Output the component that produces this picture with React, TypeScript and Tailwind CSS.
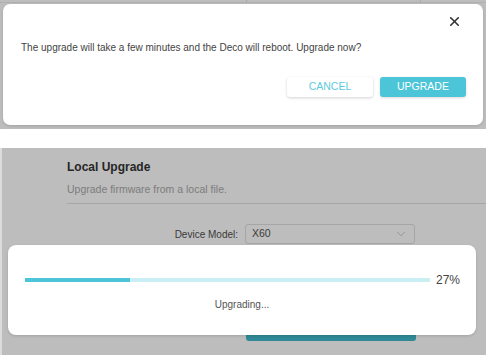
import { X, ChevronDown } from 'lucide-react';

export default function App() {
  return (
    <div className="w-[486px] h-[355px] bg-white overflow-hidden font-['Liberation_Sans',Arial,sans-serif]">
      {/* First shot: confirm dialog */}
      <div className="relative h-[129px] bg-[#bdbdbd] overflow-hidden">
        {/* page content peeking behind the overlay */}
        <div className="absolute left-0 right-0 top-[-9px] h-[12px] flex items-end border-b border-[#b0b0b0]">
          <div className="w-[246px] pr-[6px] text-right text-[10px] leading-[12px] text-[#555]">Device Model:</div>
          <div className="w-[175px] h-full border-l border-r border-[#a8a8a8] pl-[7px] text-[10px] leading-[12px] text-[#555]">X60</div>
        </div>
        <div className="relative mx-[3px] mt-[4px] h-[121px] bg-white rounded-[7px] shadow-[0_1px_3px_rgba(0,0,0,0.15)]">
          <button className="absolute right-[21px] top-[10px] text-[#333]">
            <X className="w-[15px] h-[15px]" strokeWidth={2.6} />
          </button>
          <div className="pt-[37px] pl-[18px] text-[10px] leading-[13px] text-[#444]">
            The upgrade will take a few minutes and the Deco will reboot. Upgrade now?
          </div>
          <div className="flex justify-end gap-[7px] pr-[17px] mt-[23px]">
            <button className="w-[86px] h-[20px] rounded-[3px] bg-white text-[10.5px] text-[#5ccbdb] shadow-[0_1px_3px_rgba(0,0,0,0.18)]">
              CANCEL
            </button>
            <button className="w-[86px] h-[20px] rounded-[3px] bg-[#4cc5d8] text-[10.5px] text-white shadow-[0_1px_3px_rgba(0,0,0,0.15)]">
              UPGRADE
            </button>
          </div>
        </div>
      </div>

      <div className="h-[19px]" />

      {/* Second shot: progress dialog */}
      <div className="relative h-[207px] flex">
        <div className="w-[2px] bg-[#dcdcdc]" />
        <div className="flex-1 bg-[#bdbdbd] pt-[11px] pl-[65px]">
          <div className="text-[12px] font-bold leading-[16px] text-[#262626]">Local Upgrade</div>
          <div className="mt-[7px] text-[10.5px] leading-[14px] text-[#7c7c7c] pb-[7px] border-b border-[#a6a6a6]">
            Upgrade firmware from a local file.
          </div>
          <div className="flex items-center mt-[20px]">
            <div className="w-[178px] pr-[7px] text-right text-[10px] text-[#3a3a3a]">Device Model:</div>
            <div className="w-[170px] h-[20px] rounded-[3px] border border-[#a6a6a6] flex items-center justify-between px-[6px] text-[10.5px] text-[#3a3a3a]">
              <span>X60</span>
              <ChevronDown className="w-[14px] h-[14px] text-[#8a8a8a]" strokeWidth={1.3} />
            </div>
          </div>
          <div className="ml-[179px] mt-[79px] w-[170px] h-[18px] rounded-[3px] bg-[#2f8996]" />
        </div>

        <div className="absolute left-[8px] top-[97px] w-[468px] h-[90px] bg-white rounded-[8px] shadow-[0_1px_3px_rgba(0,0,0,0.15)]">
          <div className="flex items-center pl-[17px] pt-[28px]">
            <div className="w-[405px] h-[4px] bg-[#c9eff4] flex">
              <div className="w-[105px] h-full bg-[#4cc5d8]" />
            </div>
            <span className="ml-[6px] text-[12px] leading-[14px] text-[#444]">27%</span>
          </div>
          <div className="mt-[11px] text-center text-[10px] leading-[14px] text-[#555]">Upgrading...</div>
        </div>
      </div>
    </div>
  );
}
